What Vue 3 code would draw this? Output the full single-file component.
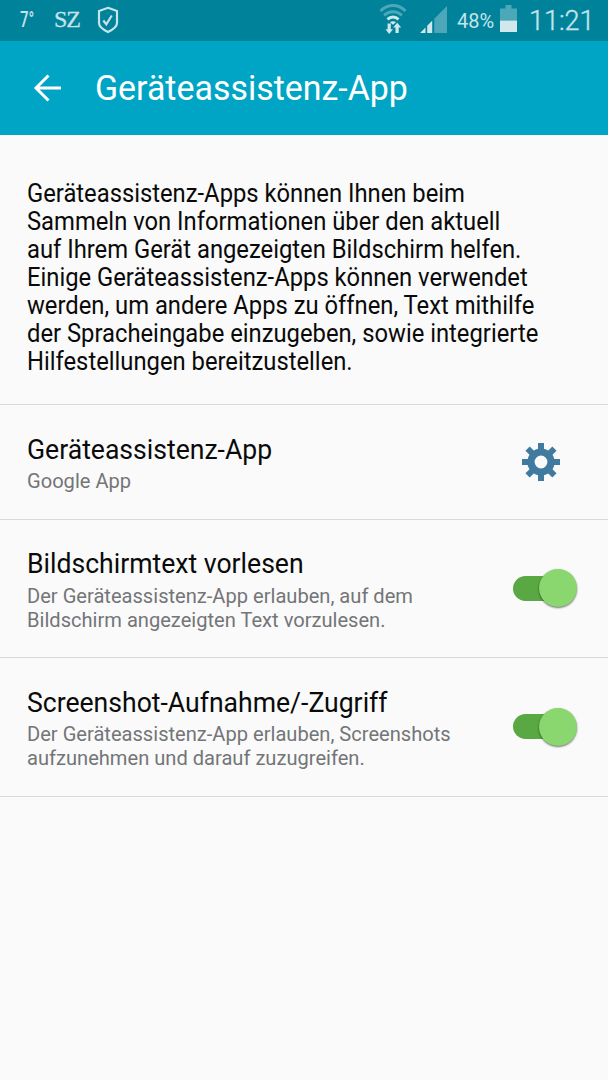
<template>
	<div class="screen">
		<header class="status-bar">
			<span class="temp">7°</span>
			<span class="paper">SZ</span>
			<svg class="shield" width="22" height="28" viewBox="0 0 22 28">
				<path d="M11 1.800 20 5v12c0 4-4.500 6.800-9 9-4.500-2.200-9-5-9-9V5z" />
				<path d="m6.300 14.500 3 3.800 5.500-8.800" />
			</svg>
			<span class="spacer"></span>
			<svg class="wifi" width="28" height="32" viewBox="0 0 28 32">
				<g fill="none" stroke-width="3">
					<path class="dim" d="M1.500 9C9 1.800 19 1.800 26.500 9" />
					<path class="dim" d="M5.200 13.500c5-5 12.600-5 17.600 0" />
					<path class="lit" d="M8.500 17.300c3.200-3 7.800-3 11 0" />
				</g>
				<path class="fill" d="M11 20.300q3-2 6 0l-3 2.500z" />
				<path class="fill" d="M8.600 21.500h3.200v5.700h2.200L10.200 32 6.500 27.200h2.100zM16.500 31v-5.500h-2.300l4-4.800 4 4.800h-2.500V31z" />
			</svg>
			<svg class="signal" width="27" height="27" viewBox="0 0 27 27">
				<path class="fill" d="M0 27 5.500 21.500V27zM7.200 27v-7.200l5-5V27z" />
				<path class="dim-fill" d="M14.300 27V12.700L27 0v27z" />
			</svg>
			<span class="percent">48%</span>
			<svg class="battery" width="17" height="27" viewBox="0 0 17 27">
				<path class="dim-fill" d="M0 3.500h5.500V0h6v3.500H17V15.500H0z" />
				<path class="fill" d="M0 15.500h17V27H0z" />
			</svg>
			<span class="clock">11:21</span>
		</header>

		<nav class="app-bar">
			<svg width="28" height="28" viewBox="0 0 28 28">
				<path d="M28 14H3M15.500 1.500 3 14l12.500 12.500" />
			</svg>
			<h1>Geräteassistenz-App</h1>
		</nav>

		<p class="intro">
			<span v-for="line in intro" :key="line">{{ line }}</span>
		</p>

		<section v-for="item in items" :key="item.title" class="row" :class="{ short: !item.toggle }">
			<div class="labels">
				<h2>{{ item.title }}</h2>
				<p><span v-for="line in item.lines" :key="line">{{ line }}</span></p>
			</div>
			<button v-if="item.toggle" class="switch" :class="{ on: item.on }" @click="item.on = !item.on">
				<span class="thumb"></span>
			</button>
			<svg v-else class="gear" width="38" height="38" viewBox="-19 -19 38 38">
				<rect v-for="n in 8" :key="n" x="-3" y="-19" width="6" height="9" :transform="`rotate(${n * 45})`" />
				<circle r="10" />
			</svg>
		</section>
	</div>
</template>

<script setup>
import { ref } from 'vue'

const intro = [
	'Geräteassistenz-Apps können Ihnen beim',
	'Sammeln von Informationen über den aktuell',
	'auf Ihrem Gerät angezeigten Bildschirm helfen.',
	'Einige Geräteassistenz-Apps können verwendet',
	'werden, um andere Apps zu öffnen, Text mithilfe',
	'der Spracheingabe einzugeben, sowie integrierte',
	'Hilfestellungen bereitzustellen.',
]

const items = ref([
	{ title: 'Geräteassistenz-App', lines: ['Google App'] },
	{
		title: 'Bildschirmtext vorlesen',
		lines: ['Der Geräteassistenz-App erlauben, auf dem', 'Bildschirm angezeigten Text vorzulesen.'],
		toggle: true,
		on: true,
	},
	{
		title: 'Screenshot-Aufnahme/-Zugriff',
		lines: ['Der Geräteassistenz-App erlauben, Screenshots', 'aufzunehmen und darauf zuzugreifen.'],
		toggle: true,
		on: true,
	},
])
</script>

<style>
body {
	background: #fafafa;
}
</style>

<style scoped>
.screen {
	width: 608px;
	height: 1080px;
	overflow: hidden;
	background: #fafafa;
	color: #0a0a0a;
	font-family: Roboto, sans-serif;
}

h1, h2, p {
	margin: 0;
	font-weight: 400;
	white-space: nowrap;
	transform-origin: left;
}

p span {
	display: block;
}

.status-bar {
	display: flex;
	box-sizing: border-box;
	height: 41px;
	padding: 0 15px 0 20px;
	background: #00829b;
	color: #c5e3e9;
}

.temp {
	width: 34px;
	padding-top: 8px;
	font: 500 22px/24px Roboto, sans-serif;
	transform: scaleX(.68);
	transform-origin: left;
}

.paper {
	width: 43px;
	padding-top: 6px;
	font: 24px/26px "Liberation Serif", serif;
	letter-spacing: -1px;
	-webkit-text-stroke: .3px #c5e3e9;
}

.shield {
	margin-top: 6px;
	fill: none;
	stroke: #c5e3e9;
	stroke-width: 2.2;
}

.spacer {
	flex: 1;
}

.dim {
	stroke: #4ca8b9;
}

.lit {
	stroke: #d0e8ec;
}

.dim-fill {
	fill: #4ca8b9;
}

.fill {
	fill: #d0e8ec;
}

.wifi {
	margin: 2px 13px 0 0;
}

.signal {
	margin: 6px 10px 0 0;
}

.percent {
	width: 43px;
	padding-top: 9px;
	font-size: 20px;
	line-height: 24px;
}

.battery {
	margin-top: 5px;
}

.clock {
	width: 64px;
	margin-left: 12px;
	padding-top: 5px;
	font-size: 27px;
	font-weight: 300;
	line-height: 32px;
	-webkit-text-stroke: .4px #c5e3e9;
}

.app-bar {
	display: flex;
	align-items: center;
	box-sizing: border-box;
	height: 94px;
	padding: 0 0 0 33px;
	background: #00a5c5;
	color: #fff;
}

.app-bar svg {
	margin-right: 34px;
	fill: none;
	stroke: #fff;
	stroke-width: 3;
}

h1 {
	padding-top: 2px;
	font-size: 35px;
	line-height: 40px;
	transform: scaleX(.969);
}

.intro {
	box-sizing: border-box;
	height: 270px;
	padding: 44.800px 0 0 27px;
	border-bottom: 1.500px solid #d9d9d9;
	font-size: 25px;
	line-height: 28.1px;
}

.intro span {
	transform: scaleX(.951);
	transform-origin: left;
}

.row {
	display: flex;
	align-items: center;
	box-sizing: border-box;
	height: 138.500px;
	padding: 0 30px 0 27px;
	border-bottom: 1.500px solid #d9d9d9;
}

.row.short {
	height: 114.500px;
	padding-right: 48px;
}

.labels {
	display: flex;
	flex: 1;
	flex-direction: column;
	align-items: flex-start;
	gap: 3.500px;
	padding-top: 3px;
}

h2 {
	font-size: 28px;
	line-height: 32px;
	transform: scaleX(.949);
}

.labels p {
	color: #737578;
	font-size: 21px;
	line-height: 24px;
	transform: scaleX(.957);
}

.gear {
	fill: #417a9f;
}

.gear circle {
	fill: none;
	stroke: #417a9f;
	stroke-width: 7.200;
}

.switch {
	display: flex;
	align-items: center;
	width: 51px;
	height: 25px;
	margin: 0 14px 0 0;
	padding: 0;
	border: 0;
	border-radius: 13px;
	background: #bbb;
}

.switch.on {
	background: #59a843;
}

.thumb {
	flex: none;
	width: 38px;
	height: 38px;
	border-radius: 50%;
	background: #eee;
	box-shadow: 0 1px 2px rgba(0, 0, 0, .55);
}

.on .thumb {
	margin-left: 26px;
	background: #89d76e;
}
</style>
